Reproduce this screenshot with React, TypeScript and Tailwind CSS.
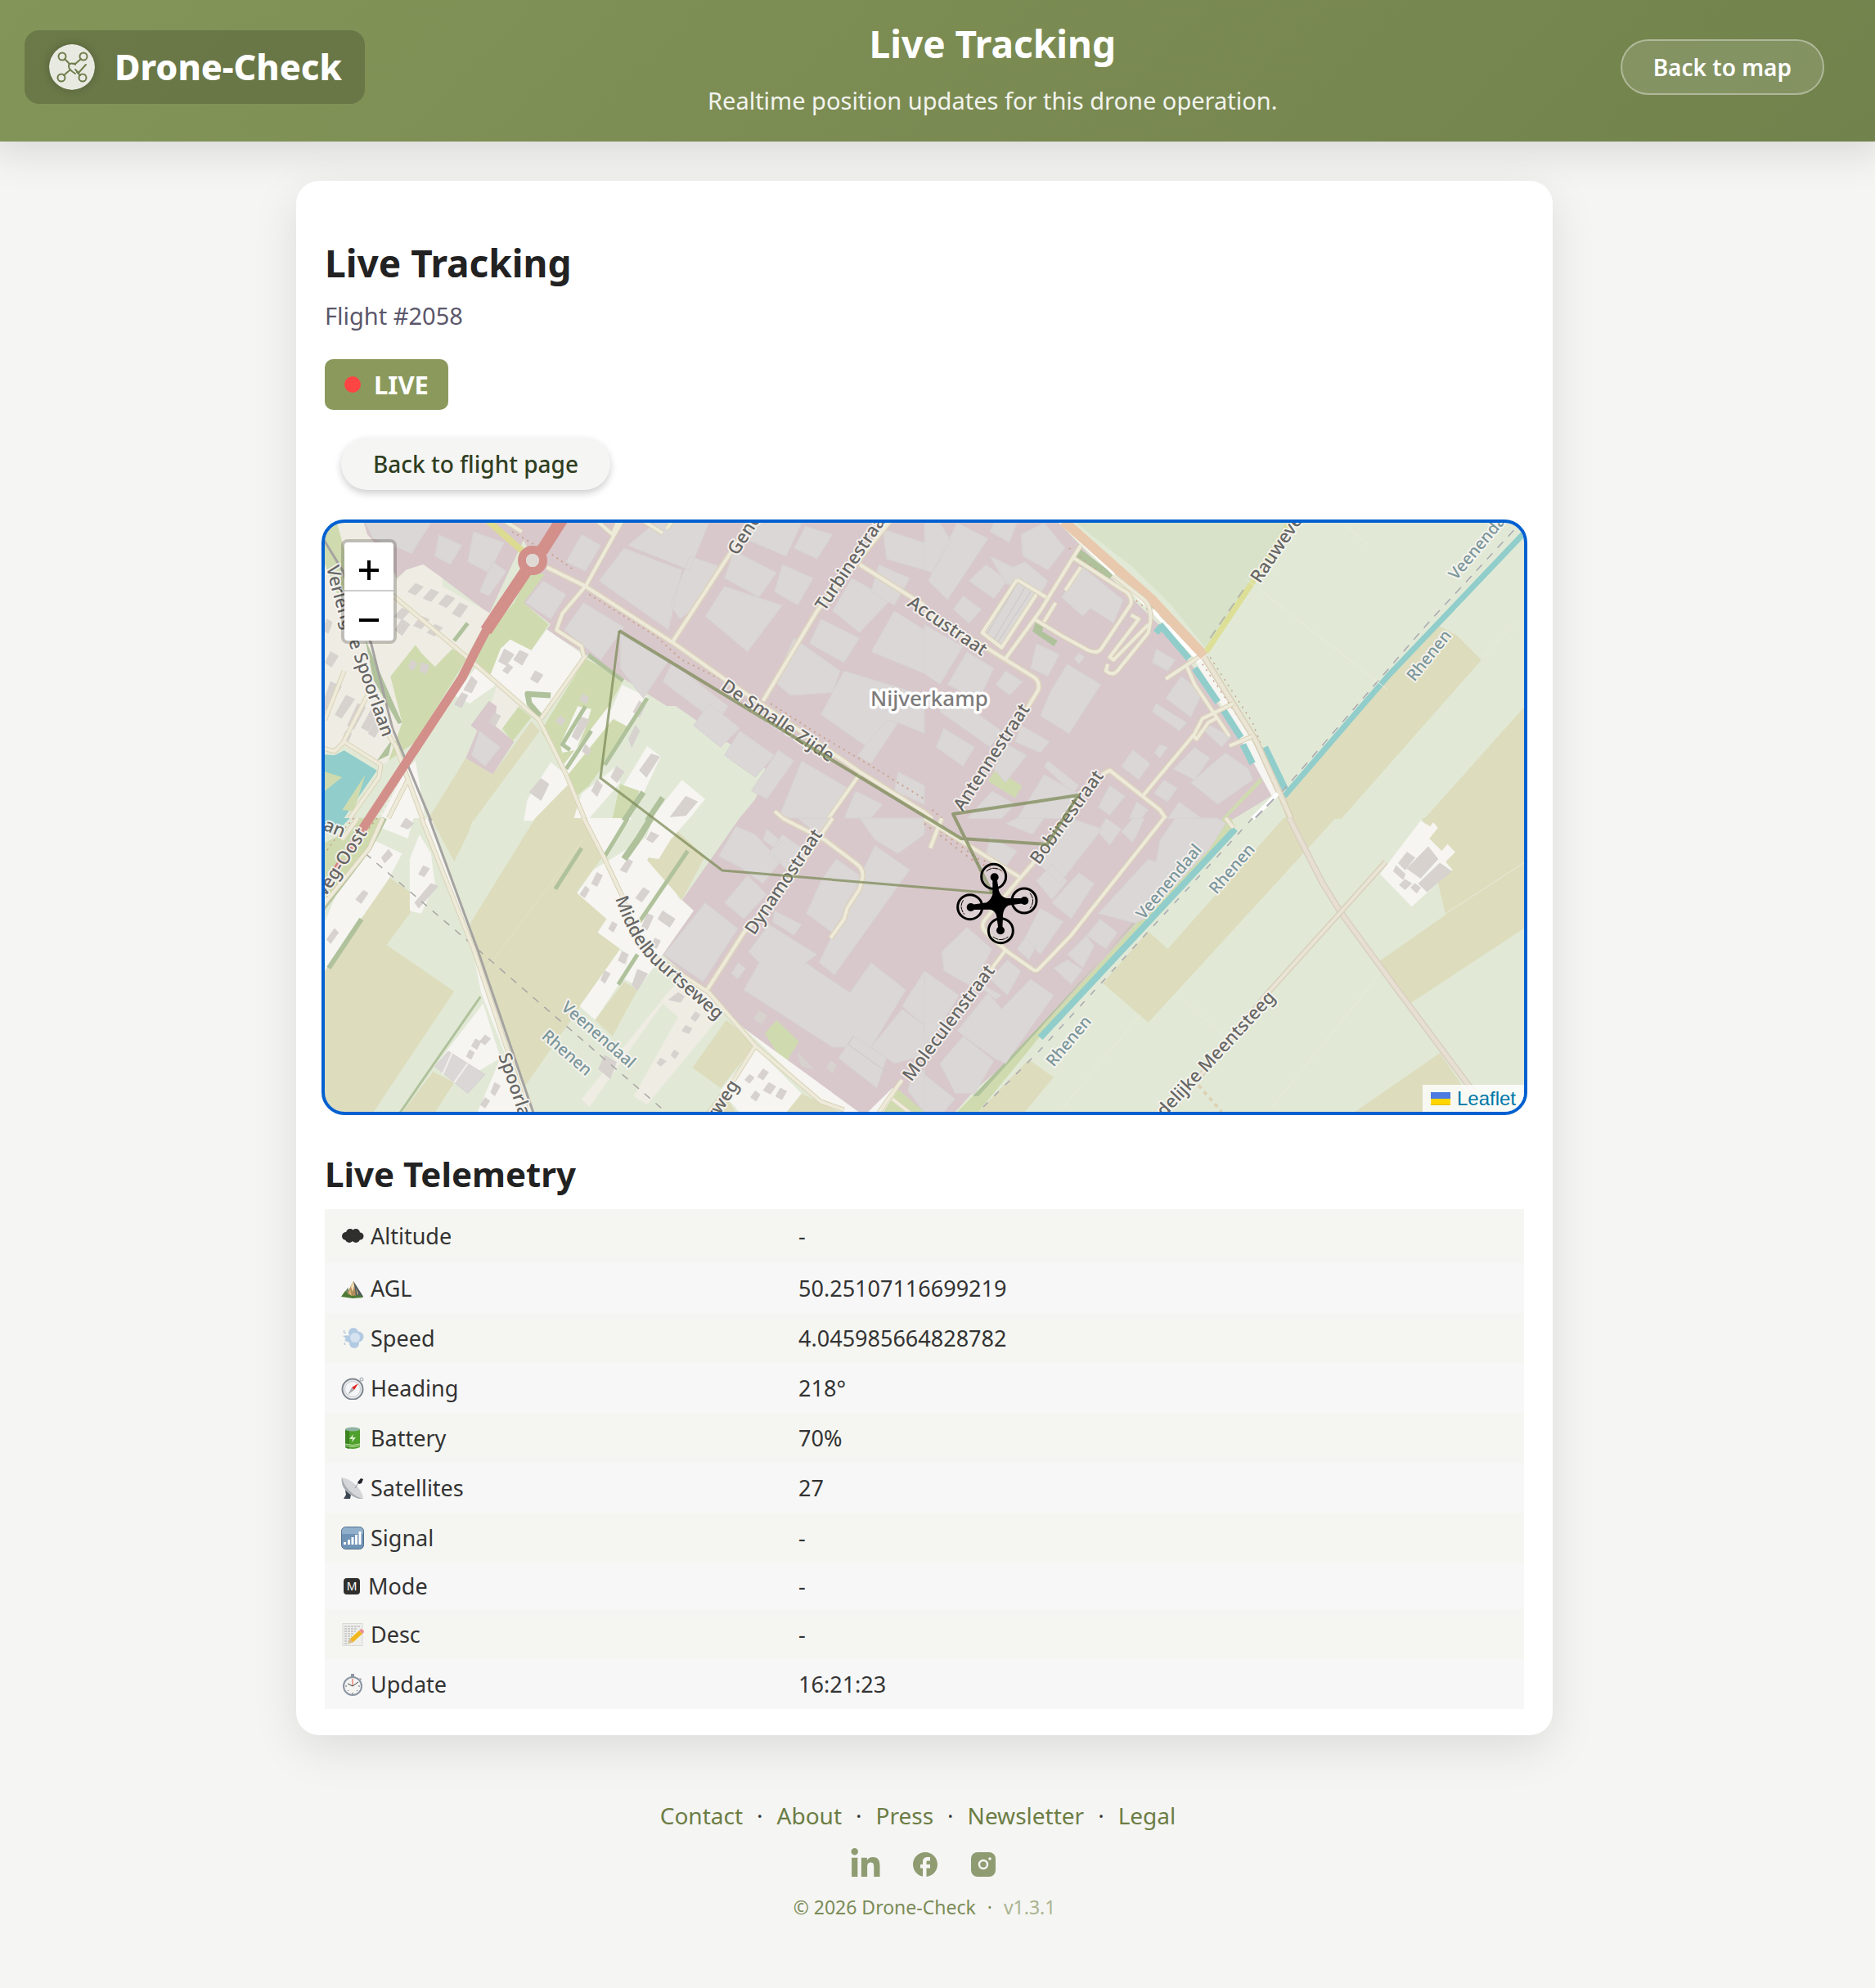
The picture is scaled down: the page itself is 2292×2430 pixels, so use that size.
import React from "react";
import { FaLinkedinIn } from "react-icons/fa";
import { MdFacebook } from "react-icons/md";

/* ---------- map data ---------- */

const C = {
  farm: "#e1e9d6",
  industry: "#d8c8cb",
  white: "#f6f5f1",
  beige: "#efece3",
  grass: "#cfdbaf",
  field: "#dddcbd",
  wood: "#b0c29c",
  meadow: "#d7e2c9",
  water: "#90cdcb",
  building: "#dad7d6",
  house: "#d8d2cf",
};

type Shape = [string, string];
type Line = [string, string, number, string?];
type Tile = { at: string; areas: Shape[]; buildings: Shape[]; lines: Line[]; roads: string[]; streets?: string[] };

const northWest: Tile = {
  at: "translate(390 630) scale(0.47194 0.33333)",
  areas: [
    [C.beige, "M0 0H110L125 70 180 160 200 240 225 200 270 180 320 230 320 260 445 360 380 520 180 900 160 920 60 840 0 870Z"],
    [C.grass, "M0 20H45L80 200 60 330 15 180Z"],
    [C.grass, "M250 475 265 505 300 555 345 490 385 520 250 830 180 900 215 760 185 590Z"],
    [C.grass, "M505 320 545 210 585 215 530 320 595 400 550 495 495 455 470 490 440 600 400 550 390 510Z"],
    [C.white, "M495 455 550 495 590 418 688 515 575 740 440 600 470 490Z"],
    [C.grass, "M690 525 790 600 755 690 750 740 800 775 740 910 700 990 670 1025 575 790Z"],
    [C.grass, "M515 700 550 740 500 830 475 780Z"],
    [C.white, "M785 622 850 665 800 775 750 735Z"],
    [C.white, "M405 560 460 620 420 660 390 690 350 660Z"],
    [C.beige, "M460 625 520 695 470 790 430 765Z"],
    [C.industry, "M440 680 460 700 455 770 505 830 450 950 380 890 410 790 393 770Z"],
    [C.field, "M550 755 572 790 400 1120H280L380 890 450 950Z"],
    [C.white, "M670 700 705 710 690 780 665 860 630 870 625 840Z"],
    [C.white, "M750 700 765 740 640 960 630 920Z"],
    [C.white, "M600 905 640 950 660 1010 600 1120H530L540 1040Z"],
    [C.field, "M650 980 690 1110H560Z"],
    [C.white, "M730 965 770 920 780 980 700 1110H660L680 1020Z"],
    [C.white, "M850 845 885 885 840 1020 780 1010Z"],
    [C.white, "M940 970 1000 1040 960 1110H860Z"],
    [C.grass, "M780 985 830 1010 800 1110H760Z"],
    [C.white, "M225 930 250 900 275 1110H160Z"],
    [C.water, "M0 875 40 880 65 862 150 935 60 1120H0Z"],
    [C.grass, "M15 940 60 960 15 1010ZM120 950 60 1080 90 1085Z"],
    [C.wood, "M120 455 215 760 205 765 140 600ZM190 820 180 880 150 900Z"],
    [C.wood, "M700 505 790 600 785 612 695 520Z"],
  ],
  buildings: [
    [C.building, "M120 27H290L240 140 190 110 140 85ZM310 70 370 110 340 180 300 150ZM400 60 480 100 440 210 385 170ZM450 170 485 205 440 295 415 280Z"],
    [C.building, "M680 70 730 110 690 205 640 170ZM790 120 940 200 905 420 725 240ZM870 27H1010L960 200 800 110ZM960 150 1045 190 980 330 935 380 910 330Z"],
    [C.building, "M535 320 580 240 640 290 600 380ZM685 320 790 410 730 530 635 420ZM780 425 905 535 840 670 780 560ZM915 540 1060 700 1030 760 890 610Z"],
    [C.building, "M1075 130 1185 210 1140 300 1050 230ZM1050 260 1200 330 1110 500 1000 370ZM1130 27H1250L1210 150 1110 90ZM1260 40 1330 70 1290 160 1230 120ZM1200 180 1280 230 1240 330 1180 280Z"],
    [C.building, "M1230 450 1350 570 1330 650 1220 660 1180 610ZM1380 230 1480 310 1400 430 1330 350ZM1490 350 1568 420V580L1430 500ZM1300 380 1400 450 1360 540 1270 470ZM1360 570 1568 660V800L1500 760 1420 850 1300 730Z"],
    [C.building, "M1460 50 1568 100V200L1470 160ZM1450 180 1530 230 1490 330 1430 280ZM1470 750 1500 760 1430 910 1395 880Z"],
    [C.building, "M1010 690 1090 780 1040 850 970 770ZM1090 790 1180 880 1130 960 1050 880ZM1190 860 1230 900 1160 1040 1120 1010ZM1250 900 1370 1000 1320 1110H1190ZM1390 1010 1460 1060 1430 1110H1360ZM1500 940 1568 990V1060L1490 1010Z"],
    [C.building, "M415 790 470 850 430 920 395 880Z"],
    [C.house, "M250 250l20 12-20 30-20-12ZM290 270l20 12-20 34-20-12ZM330 290l22 14-22 34-20-14ZM365 320l20 14-20 40-20-14ZM215 340l20 12-20 30-20-12ZM265 370l20 12-20 34-20-12ZM300 400l20 12-20 30-20-12ZM215 380l20 20-20 40-18-20Z"],
    [C.house, "M480 490l25 20-20 40-20-15ZM520 495l22 14-16 40-22-20ZM490 545l12 12-14 24-12-12ZM560 570l20 15-14 30-18-15ZM395 590l15 20-15 40-20-10ZM370 650l15 10-16 45-18-12ZM455 725l15 10-14 38-16-14ZM240 530l14 15-12 25-10-15ZM265 540l20 10-8 30-16-10Z"],
    [C.house, "M685 655l14 15-8 20-16-15ZM625 735l12 15-8 20-16-15ZM690 840l14 20-8 20-14-15ZM680 740l20 10-30 75-15-15ZM830 680l14 20-14 40-16-20ZM820 770l10 20-20 60-8-30ZM860 875l22 10-34 75-18-25ZM770 920l20 20-18 40-16-20ZM575 965l20 20-20 60-30-30ZM720 970l14 20-14 40-14-20ZM950 1030l30 20-30 50-40 5Z"],
    [C.house, "M30 610l28 18-40 90-10-20ZM70 660l22 14-34 70-16-14ZM100 690l20 14-30 80-16-14ZM140 700l18 12-30 80-18-14ZM20 380l14 12-10 40-14-10ZM150 740l18 14-24 60-16-14ZM70 790l14 10-12 40-14-10ZM30 500l20 16-18 40-16-16Z"],
  ],
  lines: [
    ["M385 395 350 460M850 670 740 915M690 700 630 840 650 860M705 790 640 930", C.wood, 5],
    ["M600 660 540 655 545 690 575 740", C.wood, 7],
    ["M840 1015 790 1120M890 1035 850 1120", C.wood, 7],
    ["M500 60 600 140 660 200M700 290 870 440 940 530 1040 600M1170 690 1290 800 1420 910 1568 1040", "#c9a491", 2, "2 5"],
    ["M405 540 340 640 240 900 160 1100", "#f4efec", 2, "3 4"],
    ["M430 10 530 135", "#dcdb92", 8],
    ["M0 60 60 200 135 470 190 780 290 1120", "#a5a3a1", 3],
  ],
  roads: [
    "M180 280 400 540 570 750 640 950 690 1120",
    "M690 515 575 745M685 515 680 480 615 420 630 360 690 260 785 20M480 20 525 60M720 20 760 70 775 20M840 20 890 65M900 50 915 20",
    "M0 850 40 865 65 830 160 915 155 960 80 1110M60 840 125 660M15 750 65 570",
    "M160 760 200 850 270 1120M215 910 230 970 180 1110",
    "M1180 1085 1210 1120M1400 950 1320 1110",
  ],
  streets: [
    "M590 190 690 260 920 470 1040 590 1400 940 1580 1100",
    "M915 465 1060 150 1120 20M1150 680 1290 350 1480 20M1400 180 1568 330",
  ],
};

const northEast: Tile = {
  at: "translate(1130 630) scale(0.47194 0.33333)",
  areas: [
    [C.meadow, "M385 20H950L850 240 730 490 640 330 540 190Z"],
    [C.field, "M1325 400 1380 440 1443 530 1080 1112H935L930 1030Z"],
    [C.field, "M1568 680V1112H1295Z"],
    [C.wood, "M400 120 490 215 480 232 385 165ZM290 385 310 400 305 425 345 460 335 480 280 425Z"],
    [C.grass, "M185 930 253 992 235 1035 165 975ZM870 962 876 975 780 1112H770Z"],
    [C.white, "M700 530 730 515 790 650 850 830 915 1015 900 1030 780 720Z"],
  ],
  buildings: [
    [C.building, "M0 27H40L70 95 20 210 0 200ZM85 27 165 85 60 310 10 240ZM180 27H240L220 100 170 60ZM250 70 310 27 365 120 320 200 255 150ZM170 150 230 190 260 170 320 240 300 290 210 250ZM160 180 215 240 180 305 115 240ZM100 295 148 345 115 395 75 345Z"],
    [C.building, "M245 240 290 290 205 480 150 435ZM410 190 515 310 490 395 430 340 410 370 355 300Z"],
    [C.building, "M0 400 100 480 40 620 0 580ZM110 500 180 560 140 680 60 620ZM210 570 255 610 220 660 185 620ZM370 545 457 620 375 800 300 735 325 650ZM290 470 350 510 320 590 275 560ZM600 490 650 530 630 570 590 540ZM400 505 415 520 400 545 388 525Z"],
    [C.building, "M60 650 200 790 170 850 40 720ZM50 780 130 850 100 920 30 850ZM250 770 325 830 300 870 235 830ZM215 840 265 880 210 980 180 930ZM320 900 400 990 385 1020 310 920ZM310 950 400 1020 350 1112H240ZM175 1010 235 1060 200 1112H110Z"],
    [C.building, "M665 590 720 650 690 740 625 670ZM600 690 680 760 660 790 590 720ZM540 860 585 910 555 970 510 920ZM700 850 740 890 700 970 645 930ZM740 770 795 810 770 850 725 790ZM780 870 840 930 850 970 760 1060 690 980ZM620 970 655 1000 630 1050 595 1020ZM480 990 520 1030 480 1100 450 1070ZM660 1050 720 1112H630ZM550 1050 580 1080 560 1112H530ZM610 840 630 850 610 890 595 870Z"],
  ],
  lines: [
    ["M240 250 160 440M260 265 180 455M275 280 190 465", "#cbc6c5", 1],
    ["M355 20 600 355 715 530", "#ffffff", 8],
    ["M375 35 600 335 725 515", "#b7c7a1", 9, "16 10"],
    ["M360 20 590 310 725 515", "#e9c9ae", 12],
    ["M375 120 600 370", "#c79f8b", 1.5, "2 6"],
    ["M730 500 850 245 950 20", "#dcdf95", 7],
    ["M740 450 835 255", "#b9b9a8", 2, "12 8"],
    ["M610 400 685 525M700 560 760 685M775 715 820 815M825 840 850 910M882 850 935 1005", C.water, 8],
    ["M932 1030 1200 590 1570 40", C.water, 7],
    ["M600 430 615 405", C.water, 8],
    ["M925 1016 1310 386 1540 34", "#a9a8b0", 1.5, "10 9"],
    ["M720 545 870 860M740 520 850 760 880 870", "#c4a38f", 1.5, "2 6"],
    ["M725 520 860 830 950 1112", "#d9cfb8", 8],
    ["M725 520 860 830 950 1112", "#e9e4d3", 5],
    ["M915 1020 850 1112", "#ffffff", 5],
    ["M905 1040 855 1112", "#a9a8b0", 2, "12 8"],
    ["M1080 20 1150 110M830 230 1200 640M1540 380 1440 530", "#e9ecd9", 1],
    ["M20 1080 45 1110", "#c79f8b", 2, "2 5"],
  ],
  roads: [
    "M405 110 385 155 300 350 210 525M240 235 315 300M240 235 150 430 200 485 290 290M385 155 510 270Q540 290 535 325L460 485Q450 510 425 495L360 445 285 380",
    "M405 190 365 275M340 320 310 390M490 220 570 310Q590 340 585 390L580 430 500 570Q488 590 470 570L475 545M535 365 555 380 480 520 490 530 580 400",
    "M625 600 710 520M680 555 700 620 790 810M800 690 720 745 700 800 565 1030M755 745 735 760 705 820 695 805M790 845 850 810",
  ],
  streets: [
    "M0 355 160 485 280 590Q300 605 295 640L265 710",
    "M460 950 480 935 610 1080 625 1112M0 1090 20 1112",
  ],
};

const southWest: Tile = {
  at: "translate(390 1000) scale(0.47194 0.33333)",
  areas: [
    [C.field, "M180 215 255 290 235 350 175 465 350 635 140 1080H0V580Z"],
    [C.white, "M15 380 110 60 215 130 180 225 15 560Z"],
    [C.white, "M170 0H245L230 75 160 35ZM235 340 265 350 300 240 290 130 260 60 235 150Z"],
    [C.white, "M265 0H290L550 1080H540L420 640 390 430Z"],
    [C.field, "M290 0H400L385 60 350 160Z"],
    [C.field, "M560 0H690L735 140 705 200 668 270 745 370 722 415 780 480 535 980 500 850 390 390Z"],
    [C.white, "M690 0H810L735 140ZM710 190 860 60 900 200 930 290 970 340 830 620 790 590 800 500 722 420 745 370 668 275Z"],
    [C.white, "M780 480 800 560 715 740 675 690Z"],
    [C.field, "M860 120 915 30 1000 140 940 300 850 155Z"],
    [C.field, "M790 600 825 630 760 800 715 740Z"],
    [C.white, "M865 0H960L910 80 880 150 830 140ZM425 680 470 880 410 930 385 1010 300 910Z"],
    [C.field, "M295 930 350 970 300 1080H215Z"],
    [C.white, "M470 880 550 1080H410Z"],
    [C.beige, "M915 620 940 600 1005 640 1055 700 850 1050 815 1020 930 730 890 680 700 1060 680 1030Z"],
    [C.field, "M1055 740 1130 830 1040 990 967 915Z"],
    [C.white, "M1130 840 1250 1010 1210 1080H1090L1040 1000Z"],
    [C.field, "M1250 1010 1350 1080H1210ZM1045 1000 1080 1080H1000Z"],
    [C.grass, "M1185 740 1243 820 1210 895 1190 870 1155 790Z"],
    [C.white, "M1100 770 1400 1080H1360L1300 1040Z"],
    [C.white, "M1485 990 1420 1080H1470L1500 1000Z"],
    [C.grass, "M1500 995 1570 1080H1460Z"],
    [C.grass, "M0 100 60 60 100 0H170L130 120 0 340Z"],
    [C.water, "M15 0H80L40 60 15 50Z"],
  ],
  buildings: [
    [C.building, "M1080 30 1130 60 1195 160 1150 240 1090 180 1035 140ZM1160 40 1200 90 1180 110 1150 80ZM1200 60 1260 120 1220 200 1165 130ZM1240 0 1330 0 1290 60ZM1340 150 1400 210 1390 330 1330 420 1262 350 1300 230Z"],
    [C.building, "M1000 310 1085 405 995 600 893 500ZM1110 210 1160 280 1100 370 1050 310ZM1180 340 1250 390 1230 430 1175 380ZM1085 530 1105 550 1085 590 1068 570Z"],
    [C.building, "M1165 390 1290 500 1260 530 1375 640 1430 530 1520 630 1430 840 1330 840 1100 630 1140 530 1112 490Z"],
    [C.building, "M1440 100 1530 190 1335 575 1295 530ZM1400 0H1568V60L1500 130 1440 80ZM1568 560V760L1510 690ZM1510 700 1568 760V870L1490 900 1430 840ZM1385 800 1470 880 1445 990 1345 880ZM1530 970 1568 920V1080L1525 1000Z"],
    [C.building, "M335 855 430 940 385 1010 300 910Z"],
    [C.house, "M180 115l10 20-20 30-8-20ZM115 265l12 10-18 38-14-15ZM40 405l10 15-20 40-10-15ZM270 175l16 10-14 30-14-10ZM290 240l18 10-50 80-10-20ZM225 0l20 20-14 20-20-10Z"],
    [C.house, "M800 150l12 10-16 40-16-10ZM720 200l14 10-14 40-14-10ZM690 250l10 12-12 30-12-12ZM840 255l16 14-20 38-16-14ZM890 340l32 30-14 30-30-30ZM850 350l16 10-16 50-14-12ZM760 380l12 10-10 28-12-12ZM785 490l16 10-10 34-16-12ZM825 555l26 16-26 60-14-18ZM740 560l14 10-14 36-10-12ZM870 440l14 10-10 28-12-10ZM860 50l20 14-16 26-16-12Z"],
    [C.house, "M430 795l14 14-14 22-14-12ZM405 810l14 10-10 28-14-12ZM390 850l12 10-8 24-12-10ZM455 970l14 12-14 36-10-12ZM430 1025l12 12-12 26-12-12ZM930 640l16 14-10 22-30-10ZM975 710l12 12-12 24-12-12ZM950 760l16 12-8 18-18-10ZM885 880l14 12-14 18-10-12ZM740 870l30 25-16 60-30-35ZM920 850l12 12-10 20-10-12Z"],
    [C.house, "M1150 920l14 12-14 28-14-12ZM1115 940l12 12-12 20-12-12ZM1165 970l18 14-14 28-18-14ZM1195 990l16 12-12 30-16-12ZM1130 1000l12 14-10 24-14-14ZM1140 705l20 20-14 30-20-20ZM1240 860l20 30 20 30-30-10ZM1325 890l15 15-10 30-15-20Z"],
  ],
  lines: [
    ["M110 370 25 550", C.wood, 6],
    ["M680 110 612 260M800 0 740 140M955 120 830 380M825 500 775 610", C.wood, 5],
    ["M860 0 825 80 790 150", C.wood, 8],
    ["M418 655 210 1080", C.wood, 3],
    ["M170 0 130 110 0 350", "#b4c49e", 6],
    ["M420 580 690 70", "#e4e3c9", 1],
    ["M345 860 320 940M385 900 350 970", "#f3f0ec", 2],
    ["M120 130 410 480 630 750 900 1080", "#a9a6a4", 1.5, "9 9"],
    ["M285 0 410 480 555 1080", "#a5a3a1", 3],
    ["M130 0 30 220 0 280", "#d9837f", 8, "18 12"],
    ["M90 0 40 80 15 130M150 0 90 110 15 270", "#c79f8b", 1.5, "2 5"],
    ["M1385 800 1370 830 1470 930", "#cbc7c6", 1],
  ],
  roads: [
    "M265 0 400 480 490 860 540 1080",
    "M685 0 740 150 790 300 830 470 1010 640 1130 835 1300 1040 1360 1070M1130 835 1070 970",
    "M1510 960 1450 1080M1485 1030 1530 1080M60 80 100 0",
    "M165 0 130 110 10 320",
  ],
  streets: ["M1200 0 1310 80 1390 165Q1410 185 1408 215L1400 260 1368 330 1360 370 1325 440M1330 0 1220 230 1100 420 1005 630"],
};

const southEast: Tile = {
  at: "translate(1130 1000) scale(0.47194 0.33333)",
  areas: [
    [C.field, "M930 0H1065L580 750 462 605 580 415 630 480Z"],
    [C.field, "M1290 0H1568V390L1258 680 1178 525 1350 355Z"],
    [C.field, "M1335 862 1440 1077H1115ZM270 885 335 950 260 1077H140Z"],
    [C.white, "M1285 10 1310 30 1318 15 1330 35 1308 75 1340 120 1355 95 1375 125 1350 160 1368 190 1262 325 1180 205Z"],
    [C.grass, "M775 0H795L805 40 560 400 300 800 140 1077H85L300 770 560 370Z"],
    [C.wood, "M780 25 550 370 300 770 140 1020 125 1020 290 775 560 360Z"],
  ],
  buildings: [
    [C.building, "M240 0 310 0 280 60 210 20ZM170 70 240 120 210 180 160 130ZM380 0 460 40 350 240 290 160ZM330 170 370 230 330 300 290 230ZM400 200 440 240 380 370 330 310ZM300 330 360 380 300 500 260 440ZM260 440 290 470 270 520 240 480ZM470 0 510 40 480 100 450 50ZM540 0 570 0 540 90 510 50Z"],
    [C.building, "M650 0H760L780 20 740 110 570 370 545 385 450 350 580 150 600 160 610 80ZM455 370 500 420 470 480 420 430ZM420 430 440 470 410 550 370 500ZM370 520 410 555 380 610 335 550Z"],
    [C.building, "M110 400 175 480 125 620 50 560 45 490ZM215 520 250 560 215 650 170 590ZM275 590 335 650 210 900 180 880 85 780 165 640 200 700ZM0 560 90 650 0 850ZM100 800 180 890 130 1010 80 1010 40 900ZM0 940 80 1030 50 1077H0ZM150 610 200 650 185 665 145 620Z"],
    [C.house, "M1250 125 1270 145 1245 190 1228 165ZM1305 105 1330 150 1285 220 1250 185ZM1335 165 1365 195 1302 270 1280 240ZM1222 175 1245 205 1240 225 1215 195ZM1245 225 1262 240 1245 262 1230 245ZM1270 240 1285 255 1275 275 1260 255Z"],
  ],
  lines: [
    ["M300 805 805 40", C.water, 8],
    ["M850 0 805 70 590 400 300 850 140 1077", "#a9a8b0", 1.5, "8 11"],
    ["M660 650 770 790M1180 570 900 1060M1568 150 1350 350M350 1077 560 720", "#e9ecd9", 1],
    ["M945 0 1030 235 1078 345 1215 610 1420 1000", "#d9cfc0", 8],
    ["M945 0 1030 235 1078 345 1215 610 1420 1000", "#e6dfd2", 5],
    ["M1195 160 1078 345 890 640 700 970", "#d9d0bb", 7],
    ["M1195 160 1078 345 890 640 700 970", "#e9e4d5", 4],
    ["M710 980 770 1077", "#dcd2b4", 4, "5 5"],
    ["M15 20 140 150 230 190M0 20 130 160 210 200", "#c79f8b", 2, "2 6"],
    ["M1420 1000 1470 1077", "#e6dfd2", 5],
  ],
  roads: ["M620 0 380 430 295 555Q288 565 278 552L210 485M210 485 170 560", "M780 0 800 35"],
  streets: ["M45 0 15 110M0 0 245 215M285 160 245 225 155 375Q145 400 160 420L215 490"],
};

const tiles = [northWest, northEast, southWest, southEast];

type Label = [string, number, number, number];

const streetLabels: Label[] = [
  ["Gene", 901, 680, -57],
  ["Turbinestraa", 1008, 748, -56],
  ["Accustraat", 1108, 740, 34],
  ["De Smalle Zijde", 880, 842, 34],
  ["Antennestraat", 1177, 993, -57],
  ["Bobinestraat", 1270, 1058, -54],
  ["Dynamostraat", 922, 1144, -56],
  ["Moleculenstraat", 1114, 1323, -53],
  ["Rauweve", 1540, 714, -56],
  ["Spoorla", 609, 1290, 71],
];

const townLabels: Label[] = [
  ["Veenendaal", 1398, 1125, -50],
  ["Rhenen", 1487, 1094, -49],
  ["Rhenen", 1288, 1305, -50],
  ["Rhenen", 1729, 834, -51],
  ["Veenenda", 1780, 710, -50],
  ["Veenendaal", 685, 1233, 41],
  ["Rhenen", 661, 1268, 41],
];

function DroneMap() {
  return (
    <svg
      className="block h-[720px] w-full"
      viewBox="397 639 1466 720"
      preserveAspectRatio="xMidYMid slice"
      role="img"
      aria-label="Map with the flight path"
    >
      <rect x="0" y="0" width="2400" height="2000" fill={C.farm} />
      <path
        fill={C.industry}
        d="M445 630V655L475 683 485 707 496 697 517 690 541 707 598 750 640 660 660 700 640 737 673 763 668 770 716 800 763 830 815 863 826 863 940 943 923 977 904 1000 834 1100 848 1113 810 1167 862 1213 890 1240 952 1293 1037 1359H1068L1092 1330 1110 1359H1168L1191 1333 1272 1263 1394 1123 1498 1007 1562 968 1526 917 1460 817 1413 760 1352 700 1286 630Z"
      />
      {tiles.map((t) => (
        <g key={t.at} transform={t.at}>
          {t.areas.map(([fill, d]) => (
            <path key={d} d={d} fill={fill} />
          ))}
          {t.buildings.map(([fill, d]) => (
            <path key={d} d={d} fill={fill} stroke="#d6d2d1" strokeWidth="1" vectorEffect="non-scaling-stroke" />
          ))}
        </g>
      ))}
      <g fill="none" strokeLinejoin="round">
        {tiles.map((t) => (
          <g key={t.at} transform={t.at}>
            {t.lines.map(([d, stroke, w, dash]) => (
              <path key={d + stroke} d={d} stroke={stroke} strokeWidth={w} strokeDasharray={dash} vectorEffect="non-scaling-stroke" />
            ))}
            {t.roads.map((d) => (
              <path key={d} d={d} stroke="#d9d2b6" strokeWidth="6" vectorEffect="non-scaling-stroke" />
            ))}
            {t.streets?.map((d) => (
              <path key={d} d={d} stroke="#dcd3bd" strokeWidth="7" vectorEffect="non-scaling-stroke" />
            ))}
            {t.roads.concat(t.streets ?? []).map((d) => (
              <path key={d + "in"} d={d} stroke="#eeeada" strokeWidth="4" vectorEffect="non-scaling-stroke" />
            ))}
          </g>
        ))}
        <path d="M690 630 662 674M643 698 594 771" stroke="#d38f8a" strokeWidth="15" />
        <path d="M600 760 580 798 565 828 490 942 440 1018" stroke="#d38f8a" strokeWidth="11" />
        <circle cx="651" cy="685" r="13" stroke="#d38f8a" strokeWidth="10" />
      </g>
      <circle cx="651" cy="685" r="8" fill="#e0d8d5" />

      <defs>
        <path id="middel" d="M752 1098Q770 1153 800 1180L900 1268" />
        <path id="verlengde" d="M399 693Q410 745 430 795L485 950" />
      </defs>
      <g
        fontFamily="'Noto Sans', sans-serif"
        fontSize="22"
        fontWeight="500"
        fill="#666664"
        stroke="#f7f5f2"
        strokeOpacity="0.85"
        strokeWidth="4"
        strokeLinejoin="round"
        style={{ paintOrder: "stroke" }}
      >
        {streetLabels.map(([text, x, y, a]) => (
          <text key={text} transform={`translate(${x} ${y}) rotate(${a})`}>
            {text}
          </text>
        ))}
        <text>
          <textPath href="#middel">Middelbuurtseweg</textPath>
        </text>
        <text>
          <textPath href="#verlengde">Verlengde Spoorlaan</textPath>
        </text>
        <text transform="translate(449 1018) rotate(-57)" textAnchor="end">
          weg-Oost
        </text>
        <text transform="translate(904 1326) rotate(-57)" textAnchor="end">
          rweg
        </text>
        <text transform="translate(394 1014) rotate(22)">an</text>
        <text transform="translate(1560 1220) rotate(-47)" textAnchor="end">
          delijke Meentsteeg
        </text>
        <g fill="#7b969b" fontSize="20">
          {townLabels.map(([text, x, y, a]) => (
            <text key={`${x}`} transform={`translate(${x} ${y}) rotate(${a})`}>
              {text}
            </text>
          ))}
        </g>
        <text x="1064" y="863" fontSize="26" fill="#7d7b7b" strokeWidth="7" strokeOpacity="1" stroke="#ffffff">
          Nijverkamp
        </text>
      </g>

      <g fill="none" stroke="#7d8b58" strokeOpacity="0.75" strokeLinejoin="round">
        <path d="M1217 1092 883 1064 734 951 757 771" strokeWidth="3" />
        <path d="M757 771 1175 1025 1280 1032 1318 972 1165 995 1213 1092" strokeWidth="4" />
      </g>

      <g transform="translate(1140 1030) scale(0.33333)" stroke="#000" strokeLinecap="round">
        {[
          [224, 124, 227, 127, "M198 104Q224 84 252 102"],
          [336, 213, 337, 213, "M358 186Q378 212 358 240"],
          [250, 323, 249, 322, "M222 346Q250 366 276 346"],
          [137, 236, 140, 237, "M112 212Q96 236 116 262"],
        ].map(([cx, cy, mx, my, arc]) => (
          <g key={arc as string}>
            <circle cx={cx} cy={cy} r="45" fill="#fff" fillOpacity="0.15" strokeWidth="9" />
            <path d={arc as string} fill="none" strokeWidth="3" strokeDasharray="20 5" />
            <circle cx={mx} cy={my} r="15" stroke="none" />
          </g>
        ))}
        <path
          stroke="none"
          d="M220 127H235L243 176Q250 198 272 204L337 204V222L278 230Q260 240 258 264L256 322H242L234 266Q228 248 210 245L140 246V228L198 220Q214 210 220 190Z"
        />
      </g>
    </svg>
  );
}

/* ---------- row icons ---------- */

function RowIcon({ children }: { children: React.ReactNode }) {
  return (
    <svg viewBox="0 0 28 28" className="size-7 shrink-0" aria-hidden="true">
      {children}
    </svg>
  );
}

const icons: Record<string, React.ReactNode> = {
  Altitude: (
    <g fill="#2f302e">
      <circle cx="6" cy="14" r="5" />
      <circle cx="11" cy="10" r="5" />
      <circle cx="18" cy="10" r="5" />
      <circle cx="23" cy="14" r="4.500" />
      <circle cx="10" cy="17" r="5" />
      <circle cx="18" cy="17" r="5" />
    </g>
  ),
  AGL: (
    <>
      <path d="M1 24 8 13 13 24Z" fill="#6f8a6a" />
      <path d="M5 24 15 5 27 24Z" fill="#b08c5a" />
      <path d="M15 5 27 24H18L17 14Z" fill="#4b5a63" />
      <path d="M15 5 12 12 14 18 16 11Z" fill="#f3ddb0" />
      <path d="M11 14 9 20 13 23ZM18 13 21 20 20 23Z" fill="#d8b57c" />
      <path d="M0 24 5 17 9 21 13 23 24 22 27 25 14 26Z" fill="#4d7a35" />
    </>
  ),
  Speed: (
    <>
      <g fill="#b3cae3">
        <circle cx="15" cy="7" r="6" />
        <circle cx="21" cy="12" r="6.500" />
        <circle cx="16" cy="20" r="6" />
        <path d="M2 11Q10 9 14 12V18Q8 20 4 16Q8 15 2 11Z" />
      </g>
      <circle cx="17" cy="13" r="6" fill="#d5e3f1" />
      <path d="M4 4Q2 8 6 7M5 19Q3 20 5 22" stroke="#9bb6d3" fill="none" />
    </>
  ),
  Heading: (
    <>
      <circle cx="25" cy="3" r="2" fill="none" stroke="#9a9ea4" />
      <circle cx="14" cy="15" r="12.500" fill="#e9ebee" stroke="#7e858d" strokeWidth="2" />
      <circle cx="14" cy="15" r="9.500" fill="#f4f5f6" stroke="#c6c9cd" />
      <path d="M21 8 16 16 13 13Z" fill="#e3241f" />
      <path d="M8 22 13 13 16 16Z" fill="#a6a9ae" />
    </>
  ),
  Battery: (
    <>
      <path d="M5 3V25Q14 29 23 25V3Z" fill="#4fa02c" />
      <path d="M5 3V25Q8 27 10 27V4Z" fill="#3b8420" />
      <ellipse cx="14" cy="3" rx="9" ry="2.500" fill="#8fb3a2" />
      <path d="M15 9 10 15H14L13 19 18 13H14Z" fill="#dff0cf" />
      <path d="M5 21Q14 24 23 21M5 23Q14 26 23 23" stroke="#c4e3a8" fill="none" />
    </>
  ),
  Satellites: (
    <>
      <path d="M5 16 9 14 12 22 11 27H3L6 22Z" fill="#3b4552" />
      <path d="M1 1Q-1 12 9 20Q18 28 27 27Q27 20 18 10Q9 2 1 1Z" fill="#d4d6d9" />
      <path d="M1 1Q-1 12 9 20Q18 28 27 27Q18 25 10 17Q3 10 1 1Z" fill="#a9adb3" />
      <path d="M17 14 22 6" stroke="#8d9298" />
      <path d="M20 7 24 2 27 3 25 8 22 9Z" fill="#23272c" />
    </>
  ),
  Signal: (
    <>
      <rect x="0.500" y="0.500" width="27" height="27" rx="5" fill="#6f93b5" stroke="#53718f" />
      <path d="M1 6Q1 1 6 1H22Q27 1 27 6V9H1Z" fill="#8fafcb" />
      <path d="M3 19H6V22H3ZM8 16H11V22H8ZM12.500 13H15.500V22H12.500ZM17 10H20V22H17ZM21.500 6H24.500V22H21.500Z" fill="#fff" />
    </>
  ),
  Desc: (
    <>
      <rect x="2" y="0.500" width="24" height="27" fill="#eeeeec" stroke="#d9d9d6" />
      <path d="M4 4H23M4 7H20M4 10H18M4 13H15M4 16H13M4 19H11M4 22H10M4 25H9" stroke="#a9a9a7" strokeDasharray="3 1" />
      <path d="M9 25 11 19 22 9 26 13 15 23Z" fill="#f0b81f" />
      <path d="M9 25 11 19 15 23Z" fill="#d9b98a" />
      <path d="M22 9 24 7Q28 8 28 11L26 13Z" fill="#ee8d93" />
    </>
  ),
  Update: (
    <>
      <path d="M12 1H16V5H12ZM22 6 25 7 24 9Z" fill="#8c96a3" />
      <circle cx="14" cy="16" r="11" fill="#f4f4f3" stroke="#8c96a3" strokeWidth="2" />
      <path d="M14 16V7" stroke="#e98a7a" strokeWidth="1.500" />
      <path d="M14 16 8 13M14 16 21 11" stroke="#444" />
      <path d="M14 24V26M5 16H7M21 16H23M8 22 9 21M20 22 19 21" stroke="#666" />
    </>
  ),
};

const rows: [string, string][] = [
  ["Altitude", "-"],
  ["AGL", "50.25107116699219"],
  ["Speed", "4.045985664828782"],
  ["Heading", "218°"],
  ["Battery", "70%"],
  ["Satellites", "27"],
  ["Signal", "-"],
  ["Mode", "-"],
  ["Desc", "-"],
  ["Update", "16:21:23"],
];

function Logo() {
  return (
    <svg viewBox="0 0 56 56" className="size-14 rounded-full shadow-[0_0_12px_rgba(0,0,0,0.2)]" aria-hidden="true">
      <circle cx="28" cy="28" r="28" fill="#e8eae2" />
      <g fill="none" stroke="#6f7d4a" strokeWidth="2" strokeLinecap="round" strokeLinejoin="round">
        <circle cx="16" cy="15" r="4.500" />
        <circle cx="42" cy="15" r="4.500" />
        <circle cx="15" cy="41" r="4.500" />
        <circle cx="41" cy="41" r="4.500" />
        <path d="M19 18 25 24M39 18 32 24M18 38 25 32M38 38 34 34" />
        <path d="M32 36Q24 31 24 27Q24 24 26 24Q28 23 29 24Q31 23 32 25" />
        <path d="M32 31 36 35 45 25" />
      </g>
    </svg>
  );
}

const links = ["Contact", "About", "Press", "Newsletter", "Legal"];

export default function App() {
  return (
    <div className="min-h-screen overflow-x-hidden bg-[#f5f5f3] font-['Noto_Sans',sans-serif] text-[#222]">
      <header className="bg-linear-135 from-[#849559] to-[#72824c] pr-8 shadow-[0_0_48px_12px_rgba(0,0,0,0.12)]">
        <div className="flex h-[173px] items-center justify-between px-[30px] pb-[10px]">
          <a href="#" className="flex items-center gap-6 rounded-[18px] bg-black/18 py-[17px] pr-7 pl-[30px]">
            <Logo />
            <span className="text-[43px] leading-[56px] font-extrabold text-white">Drone-Check</span>
          </a>
          <div className="pt-3 text-center text-white">
            <h1 className="text-[46px] leading-[70px] font-bold">Live Tracking</h1>
            <p className="text-[29px] leading-[70px] text-white/90">Realtime position updates for this drone operation.</p>
          </div>
          <button className="h-[68px] rounded-full border-2 border-white/35 bg-white/12 px-[38px] text-[28px] font-semibold text-white">
            Back to map
          </button>
        </div>
      </header>

      <div className="pt-12 pr-8">
        <main className="mx-auto max-w-[1536px] rounded-[28px] bg-white px-[35px] pt-[68px] pb-8 shadow-[0_16px_56px_rgba(0,0,0,0.1)]">
          <h2 className="text-[46px] leading-[64px] font-bold">Live Tracking</h2>
          <p className="text-[29px] leading-[66px] text-[#5c576b]">Flight #2058</p>
          <div className="mt-5 flex">
            <span className="flex h-[62px] items-center gap-4 rounded-[10px] bg-[#8b9a5c] px-6 text-[31px] font-bold text-white">
              <span className="size-5 rounded-full bg-[#ff4444]" />
              LIVE
            </span>
          </div>
          <button className="mt-[34px] ml-5 block h-16 rounded-full bg-[#f5f5f3] px-[39px] text-[28px] font-medium text-[#2f3e1f] shadow-[0_4px_10px_rgba(0,0,0,0.2)]">
            Back to flight page
          </button>

          <section className="relative mt-10 overflow-hidden rounded-[24px] outline-4 outline-[#0060d0]">
            <DroneMap />
            <div className="absolute top-5 left-5 w-[68px] rounded-lg border-4 border-black/20 bg-white bg-clip-padding">
              <button aria-label="Zoom in" className="flex h-[60px] w-full items-center justify-center border-b-2 border-[#ccc]">
                <svg viewBox="0 0 26 26" className="mt-2.5 size-[26px]">
                  <path d="M13 1V25M1 13H25" stroke="#000" strokeWidth="4" />
                </svg>
              </button>
              <button aria-label="Zoom out" className="flex h-[60px] w-full items-center justify-center">
                <svg viewBox="0 0 26 26" className="mt-2.5 size-[26px]">
                  <path d="M1 13H25" stroke="#000" strokeWidth="4" />
                </svg>
              </button>
            </div>
            <div className="absolute right-0 bottom-0 flex h-[33px] items-center gap-2 bg-white/80 px-[10px] font-['Liberation_Sans',Arial,sans-serif] text-2xl">
              <svg viewBox="0 0 24 16" className="h-4 w-6" aria-hidden="true">
                <path fill="#4c7be1" d="M0 0h24v8H0z" />
                <path fill="#ffd500" d="M0 8h24v7H0z" />
                <path fill="#e0bc00" d="M0 15h24v1H0z" />
              </svg>
              <a href="#" className="text-[#0078a8]">
                Leaflet
              </a>
            </div>
          </section>

          <h3 className="mt-[46px] mb-[13px] text-[42px] leading-[60px] font-bold">Live Telemetry</h3>
          <table className="w-full text-left text-[27px] leading-10 text-[#333]">
            <tbody>
              {rows.map(([label, value]) => (
                <tr
                  key={label}
                  className={`odd:bg-[#f5f6f1] even:bg-[#f7f7f7] first:h-[66px] ${label === "Mode" ? "h-[57px]" : "h-[61px]"}`}
                >
                  <th scope="row" className="w-[38%] pl-5 font-normal">
                    <span className="flex items-center gap-2">
                      {label === "Mode" ? (
                        <span className="mr-0.5 ml-[3px] flex size-5 items-center justify-center rounded-[4px] bg-[#2f302e] text-sm text-white">
                          M
                        </span>
                      ) : (
                        <RowIcon>{icons[label]}</RowIcon>
                      )}
                      {label}
                    </span>
                  </th>
                  <td className="pl-[22px]">{value}</td>
                </tr>
              ))}
            </tbody>
          </table>
        </main>

        <footer className="pt-[70px] pb-16 text-center text-[#7c8c58]">
          <nav className="flex justify-center gap-[17px] pr-4 text-[28px] leading-[56px]">
            {links.map((l, i) => (
              <React.Fragment key={l}>
                {i > 0 && <span className="text-[#333]">·</span>}
                <a href="#" className="text-[#6c7d45]">
                  {l}
                </a>
              </React.Fragment>
            ))}
          </nav>
          <div className="mt-3 flex items-center justify-center gap-[35px] pr-0.5 text-[#8f9c72]">
            <a href="#" aria-label="LinkedIn">
              <FaLinkedinIn size={40} />
            </a>
            <a href="#" aria-label="Facebook">
              <MdFacebook size={36} />
            </a>
            <a href="#" aria-label="Instagram">
              <svg viewBox="0 0 36 36" className="size-9" aria-hidden="true">
                <rect x="3" y="3" width="30" height="30" rx="8" fill="currentColor" />
                <circle cx="18" cy="18" r="5" fill="none" stroke="#f5f5f3" strokeWidth="2.500" />
                <circle cx="26" cy="11" r="1.800" fill="#f5f5f3" />
              </svg>
            </a>
          </div>
          <p className="mt-3 text-[23px] leading-[40px]">
            © 2026 Drone-Check <span className="mx-2">·</span> <span className="text-[#a9b390]">v1.3.1</span>
          </p>
        </footer>
      </div>
    </div>
  );
}
